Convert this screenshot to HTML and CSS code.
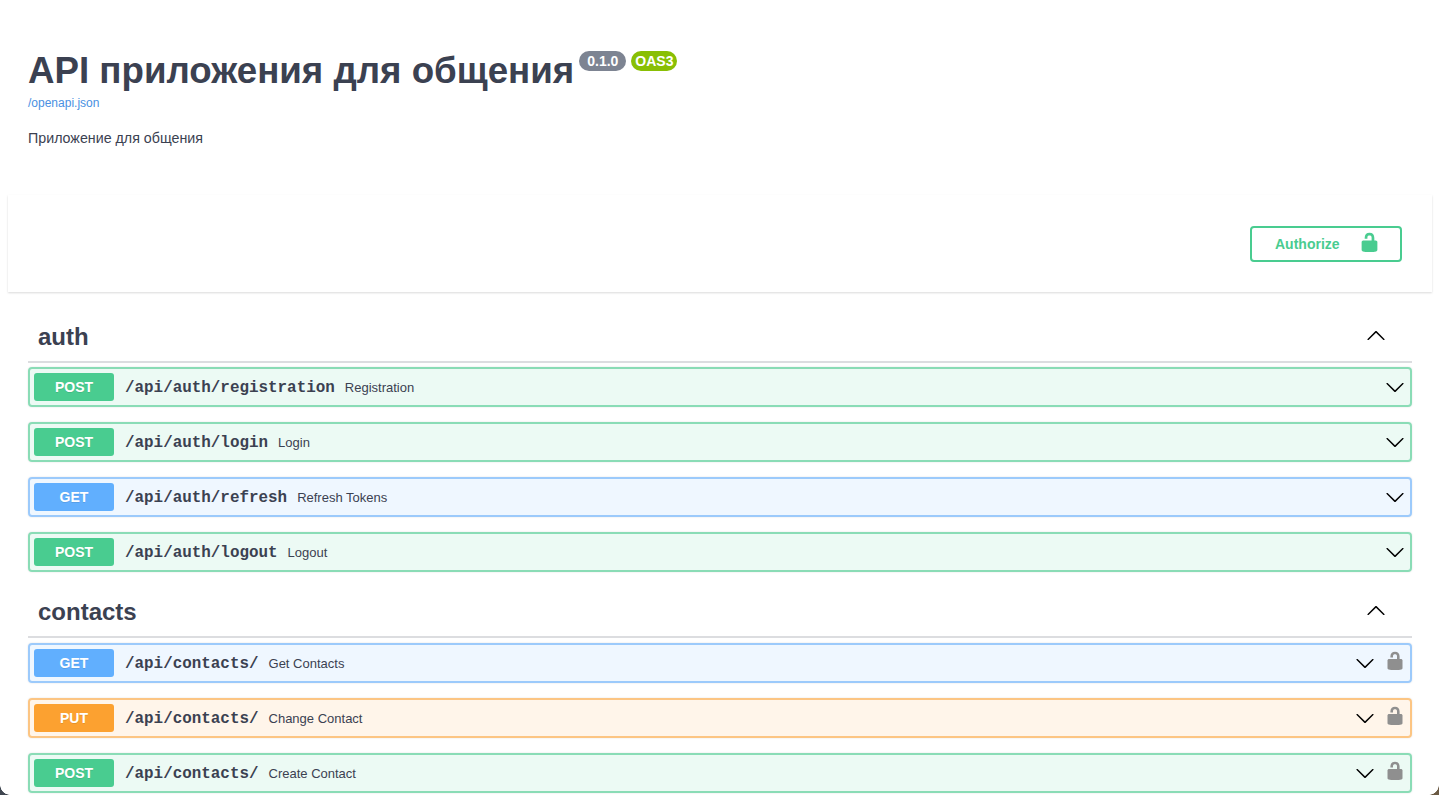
FILE: index.html
```html
<!DOCTYPE html>
<html lang="en">
<head>
  <meta charset="UTF-8" />
  <meta name="viewport" content="width=device-width, initial-scale=1.0" />
  <title>API приложения для общения</title>
  <link rel="stylesheet" href="styles.css">
</head>
<body>

<svg class="icon-defs" width="0" height="0">
  <symbol id="lock-open" viewBox="0 0 20 20">
    <path d="M14.6 9V5.6C14.6 2.6 12.9.8 10 .8 7.1.8 5.4 2.6 5.4 5.6V6.4H8V5.2C8 3.9 8.8 3.3 10 3.3c1.2 0 2 .6 2 1.9V9z"/>
    <path d="M4 8h12c.8 0 1.5.7 1.5 1.5V17c0 .8-.5 1.3-1.1 1.5l-1.4.3c-.6.1-1.4.2-2 .2H7c-.6 0-1.4-.1-2-.2l-1.4-.3c-.6-.2-1.1-.7-1.1-1.5V9.500C2.500 8.700 3.200 8 4 8z"/>
  </symbol>
  <symbol id="arrow-down" viewBox="0 0 20 20">
    <path d="M17.418 6.109c.272-.268.709-.268.979 0s.271.701 0 .969l-7.908 7.83c-.27.268-.707.268-.979 0l-7.908-7.83c-.27-.268-.27-.701 0-.969.271-.268.709-.268.979 0L10 13.25l7.418-7.141z"/>
  </symbol>
  <symbol id="arrow-up" viewBox="0 0 20 20">
    <path d="M2.582 13.891c-.272.268-.709.268-.979 0s-.271-.701 0-.969l7.908-7.83c.27-.268.707-.268.979 0l7.908 7.83c.27.268.27.701 0 .969-.271.268-.709.268-.979 0L10 6.75l-7.418 7.141z"/>
  </symbol>
</svg>

<div class="page">

  <!-- Info -->
  <section class="info">
    <div class="title-row">
      <h1>API приложения для общения</h1>
      <span class="badge badge-version">0.1.0</span>
      <span class="badge badge-oas">OAS3</span>
    </div>
    <a class="spec-link" href="#">/openapi.json</a>
    <p class="description">Приложение для общения</p>
  </section>

  <!-- Authorize -->
  <section class="scheme">
    <button class="authorize" type="button">
      <span>Authorize</span>
      <svg class="authorize-lock"><use href="#lock-open"/></svg>
    </button>
  </section>

  <!-- Operations -->
  <section class="tags">

    <div class="tag">
      <div class="tag-head">
        <h3>auth</h3>
        <svg class="tag-arrow"><use href="#arrow-up"/></svg>
      </div>

      <div class="op op-post">
        <span class="method">POST</span>
        <span class="path">/api/auth/registration</span>
        <span class="summary">Registration</span>
        <svg class="op-arrow"><use href="#arrow-down"/></svg>
      </div>
      <div class="op op-post">
        <span class="method">POST</span>
        <span class="path">/api/auth/login</span>
        <span class="summary">Login</span>
        <svg class="op-arrow"><use href="#arrow-down"/></svg>
      </div>
      <div class="op op-get">
        <span class="method">GET</span>
        <span class="path">/api/auth/refresh</span>
        <span class="summary">Refresh Tokens</span>
        <svg class="op-arrow"><use href="#arrow-down"/></svg>
      </div>
      <div class="op op-post">
        <span class="method">POST</span>
        <span class="path">/api/auth/logout</span>
        <span class="summary">Logout</span>
        <svg class="op-arrow"><use href="#arrow-down"/></svg>
      </div>
    </div>

    <div class="tag">
      <div class="tag-head">
        <h3>contacts</h3>
        <svg class="tag-arrow"><use href="#arrow-up"/></svg>
      </div>

      <div class="op op-get">
        <span class="method">GET</span>
        <span class="path">/api/contacts/</span>
        <span class="summary">Get Contacts</span>
        <svg class="op-arrow"><use href="#arrow-down"/></svg>
        <svg class="op-lock"><use href="#lock-open"/></svg>
      </div>
      <div class="op op-put">
        <span class="method">PUT</span>
        <span class="path">/api/contacts/</span>
        <span class="summary">Change Contact</span>
        <svg class="op-arrow"><use href="#arrow-down"/></svg>
        <svg class="op-lock"><use href="#lock-open"/></svg>
      </div>
      <div class="op op-post">
        <span class="method">POST</span>
        <span class="path">/api/contacts/</span>
        <span class="summary">Create Contact</span>
        <svg class="op-arrow"><use href="#arrow-down"/></svg>
        <svg class="op-lock"><use href="#lock-open"/></svg>
      </div>
    </div>

  </section>
</div>

<div class="corner corner-left"></div>
<div class="corner corner-right"></div>

</body>
</html>
```

FILE: styles.css
```css
/* General Styling */
html, body {
  height: 100%;
}

body {
  margin: 0;
  overflow: hidden;
  background-color: #fff;
  color: #3b4151;
  font-family: "Liberation Sans", Arial, sans-serif;
}

.icon-defs {
  position: absolute;
}

.page {
  padding: 0 7px 0 8px;
}

/* Info */
.info {
  padding: 50px 20px 0;
  height: 145px;
}

.title-row {
  display: flex;
  align-items: flex-start;
}

h1 {
  margin: 0;
  font-size: 36.7px;
  line-height: 41px;
  font-weight: 700;
  white-space: nowrap;
}

.badge {
  margin: 1px 0 0 5px;
  height: 20px;
  padding: 0 8px;
  border-radius: 10px;
  color: #fff;
  font-size: 14px;
  line-height: 20px;
  font-weight: 700;
}

.badge-version {
  background-color: #7d8492;
}

.badge-oas {
  padding: 0 4px;
  background-color: #89bf04;
}

.spec-link {
  display: block;
  margin-top: 5px;
  color: #4990e2;
  font-size: 12px;
  line-height: 15px;
  text-decoration: none;
}

.description {
  margin: 19px 0 0;
  font-size: 14.25px;
  line-height: 17px;
}

/* Authorize */
.scheme {
  display: flex;
  justify-content: flex-end;
  align-items: center;
  height: 97px;
  padding: 0 30px;
  background-color: #fff;
  box-shadow: 0 1px 2px 0 rgba(0,0,0,0.15);
}

.authorize {
  display: flex;
  align-items: center;
  justify-content: space-between;
  box-sizing: border-box;
  width: 152px;
  height: 36px;
  padding: 0 20px 0 23px;
  border: 2px solid #49cc90;
  border-radius: 4px;
  background: transparent;
  color: #49cc90;
  font-family: inherit;
  font-size: 14px;
  font-weight: 700;
}

.authorize-lock {
  width: 21px;
  height: 21px;
  margin-bottom: 2px;
  fill: #49cc90;
}

/* Operations */
.tags {
  padding: 20px 20px 0;
}

.tag-head {
  display: flex;
  align-items: center;
  justify-content: space-between;
  box-sizing: border-box;
  height: 51px;
  padding: 0 26px 0 10px;
  margin-bottom: 4px;
  border-bottom: 2px solid #dcdde0;
}

.tag + .tag {
  margin-top: 15px;
}

.tag + .tag .tag-head {
  margin-bottom: 5px;
}

h3 {
  margin: 0;
  font-size: 24px;
  line-height: 30px;
  font-weight: 700;
}

.tag-arrow {
  width: 20px;
  height: 20px;
  margin-top: -1px;
}

.op {
  display: flex;
  align-items: center;
  box-sizing: border-box;
  height: 40px;
  margin-bottom: 15px;
  padding: 0 5px 0 4px;
  border: 2px solid;
  border-radius: 4px;
  box-shadow: 0 0 2px rgba(0,0,0,0.12);
}

.op-post {
  border-color: #8adcb6;
  background-color: rgba(73,204,144,0.1);
}

.op-get {
  border-color: #9ccafb;
  background-color: rgba(97,175,254,0.1);
}

.op-put {
  border-color: #fcc583;
  background-color: rgba(252,161,48,0.1);
}

.method {
  flex: none;
  width: 80px;
  height: 28px;
  border-radius: 3px;
  color: #fff;
  font-size: 14px;
  line-height: 29px;
  font-weight: 700;
  text-align: center;
  text-shadow: 0 1px 0 rgba(0,0,0,0.1);
}

.op-post .method {
  background-color: #49cc90;
}

.op-get .method {
  background-color: #61affe;
}

.op-put .method {
  background-color: #fca130;
}

.path {
  margin: 2px 0 0 11px;
  font-family: "Liberation Mono", "Courier New", monospace;
  font-size: 15.9px;
  font-weight: 700;
  white-space: nowrap;
}

.summary {
  flex: 1;
  margin: 1px 0 0 10px;
  font-size: 13px;
  line-height: 16px;
}

.op-arrow {
  flex: none;
  width: 20px;
  height: 20px;
}

.op-lock {
  flex: none;
  width: 20px;
  height: 20px;
  margin: 0 0 4px 10px;
  fill: #8f8f8f;
}

/* Window corners at the bottom of the shot */
.corner {
  position: fixed;
  bottom: 0;
  width: 10px;
  height: 10px;
  background: #fff;
}

.corner-left {
  left: 0;
  background: radial-gradient(circle at 100% 0, transparent 9.5px, #3f4650 10px);
}

.corner-right {
  right: 0;
  background: radial-gradient(circle at 0 0, transparent 9.5px, #6b5a44 10px);
}
```
